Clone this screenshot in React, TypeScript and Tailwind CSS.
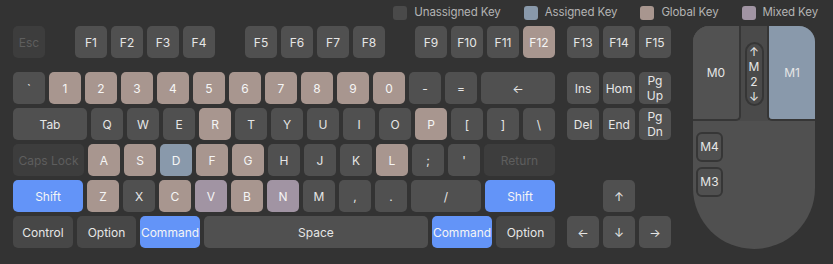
import React from "react";

type Kind = "n" | "d" | "g" | "a" | "m" | "b" | "o";

const tone: Record<Kind, string> = {
  n: "bg-[#505050] text-[#e6e6e6]",
  o: "bg-[#474747] text-[#e6e6e6]",
  d: "bg-[#3d3d3d] text-[#5e5e5e]",
  g: "bg-[#a8968f] text-[#f5f5f5]",
  a: "bg-[#8999ab] text-[#f5f5f5]",
  m: "bg-[#a194a3] text-[#f5f5f5]",
  b: "bg-[#6394f8] text-[#f5f5f5]",
};

const Key = ({ label, kind = "n", w = "w-8" }: { label: React.ReactNode; kind?: Kind; w?: string }) => (
  <div className={`${w} ${tone[kind]} h-8 shrink-0 rounded-[5px] flex items-center justify-center text-center leading-[15px]`}>
    {label}
  </div>
);

const Row = ({ children }: { children: React.ReactNode }) => <div className="flex gap-1">{children}</div>;

const Legend = ({ color, label }: { color: string; label: string }) => (
  <div className="flex items-center gap-[7px]">
    <div className={`w-[14px] h-[14px] rounded-[3px] ${color}`} />
    <span className="text-[#b3b3b3] tracking-[-0.1px]">{label}</span>
  </div>
);

const Mouse = () => (
  <div className="w-[122px] h-[223px] flex flex-col rounded-t-[16px] rounded-b-[61px] overflow-hidden bg-[#505050] text-[#e6e6e6]">
    <div className="flex h-[95px] bg-[#4a4a4a]">
      <div className="w-[48px] bg-[#525252] border-r-2 border-b-2 border-[#363636] rounded-br-[5px] flex items-center justify-center">
        M0
      </div>
      <div className="w-[26px] flex justify-center pt-[16px]">
        <div className="w-[19px] h-[64px] border-2 border-[#363636] rounded-full flex flex-col items-center justify-center leading-[15px]">
          <span>↑</span>
          <span>M</span>
          <span>2</span>
          <span>↓</span>
        </div>
      </div>
      <div className="flex-1 bg-[#8999ab] border-l-2 border-b-2 border-[#363636] rounded-bl-[5px] flex items-center justify-center">
        M1
      </div>
    </div>
    <div className="flex-1 flex flex-col gap-[5px] pl-[3px] pt-[11px]">
      <div className="w-[27px] h-[30px] border-2 border-[#363636] rounded-[6px] flex items-center justify-center">M4</div>
      <div className="w-[27px] h-[30px] border-2 border-[#363636] rounded-[6px] flex items-center justify-center">M3</div>
    </div>
  </div>
);

export default function App() {
  return (
    <div className="w-[833px] h-[264px] bg-[#333333] font-['Inter',sans-serif] text-[12px] pl-[13px]">
      <div className="h-[26px] flex items-center justify-end gap-[23px] pr-[15px] pb-[1px] text-[11.5px]">
        <Legend color="bg-[#4a4a4a]" label="Unassigned Key" />
        <Legend color="bg-[#8999ab]" label="Assigned Key" />
        <Legend color="bg-[#a8968f]" label="Global Key" />
        <Legend color="bg-[#a194a3]" label="Mixed Key" />
      </div>
      <div className="flex items-start">
        <div className="w-[542px] flex flex-col">
          <div className="flex justify-between mb-[14px]">
            <Key label="Esc" kind="d" />
            <Row>
              <Key label="F1" />
              <Key label="F2" />
              <Key label="F3" />
              <Key label="F4" />
            </Row>
            <Row>
              <Key label="F5" />
              <Key label="F6" />
              <Key label="F7" />
              <Key label="F8" />
            </Row>
            <Row>
              <Key label="F9" />
              <Key label="F10" />
              <Key label="F11" />
              <Key label="F12" kind="g" />
            </Row>
          </div>
          <div className="flex flex-col gap-1">
            <Row>
              <Key label="`" />
              {["1", "2", "3", "4", "5", "6", "7", "8", "9", "0"].map((k) => (
                <Key key={k} label={k} kind="g" />
              ))}
              <Key label="-" />
              <Key label="=" />
              <Key label="←" w="flex-1" />
            </Row>
            <Row>
              <Key label="Tab" w="w-[74px]" />
              <Key label="Q" />
              <Key label="W" />
              <Key label="E" />
              <Key label="R" kind="g" />
              <Key label="T" />
              <Key label="Y" />
              <Key label="U" />
              <Key label="I" />
              <Key label="O" />
              <Key label="P" kind="g" />
              <Key label="[" />
              <Key label="]" />
              <Key label="\" />
            </Row>
            <Row>
              <Key label="Caps Lock" kind="d" w="w-[71px]" />
              <Key label="A" kind="g" />
              <Key label="S" kind="g" />
              <Key label="D" kind="a" />
              <Key label="F" kind="g" />
              <Key label="G" kind="g" />
              <Key label="H" />
              <Key label="J" />
              <Key label="K" />
              <Key label="L" kind="g" />
              <Key label=";" />
              <Key label="'" />
              <Key label="Return" kind="d" w="flex-1" />
            </Row>
            <Row>
              <Key label="Shift" kind="b" w="w-[70px]" />
              <Key label="Z" kind="g" />
              <Key label="X" />
              <Key label="C" kind="g" />
              <Key label="V" kind="m" />
              <Key label="B" kind="g" />
              <Key label="N" kind="m" />
              <Key label="M" />
              <Key label="," />
              <Key label="." />
              <Key label="/" w="w-[70px]" />
              <Key label="Shift" kind="b" w="flex-1" />
            </Row>
            <Row>
              <Key label="Control" kind="o" w="w-[60px]" />
              <Key label="Option" kind="o" w="w-[59px]" />
              <Key label="Command" kind="b" w="w-[60px]" />
              <Key label="Space" w="flex-1" />
              <Key label="Command" kind="b" w="w-[60px]" />
              <Key label="Option" kind="o" w="w-[59px]" />
            </Row>
          </div>
        </div>
        <div className="ml-3 w-[104px] flex flex-col">
          <div className="mb-[14px]">
            <Row>
              <Key label="F13" />
              <Key label="F14" />
              <Key label="F15" />
            </Row>
          </div>
          <div className="flex flex-col gap-1">
            <Row>
              <Key label="Ins" />
              <Key label="Hom" />
              <Key label={<>Pg<br />Up</>} />
            </Row>
            <Row>
              <Key label="Del" />
              <Key label="End" />
              <Key label={<>Pg<br />Dn</>} />
            </Row>
            <div className="h-8" />
            <div className="flex justify-center">
              <Key label="↑" />
            </div>
            <Row>
              <Key label="←" />
              <Key label="↓" />
              <Key label="→" />
            </Row>
          </div>
        </div>
        <div className="ml-[22px]">
          <Mouse />
        </div>
      </div>
    </div>
  );
}
